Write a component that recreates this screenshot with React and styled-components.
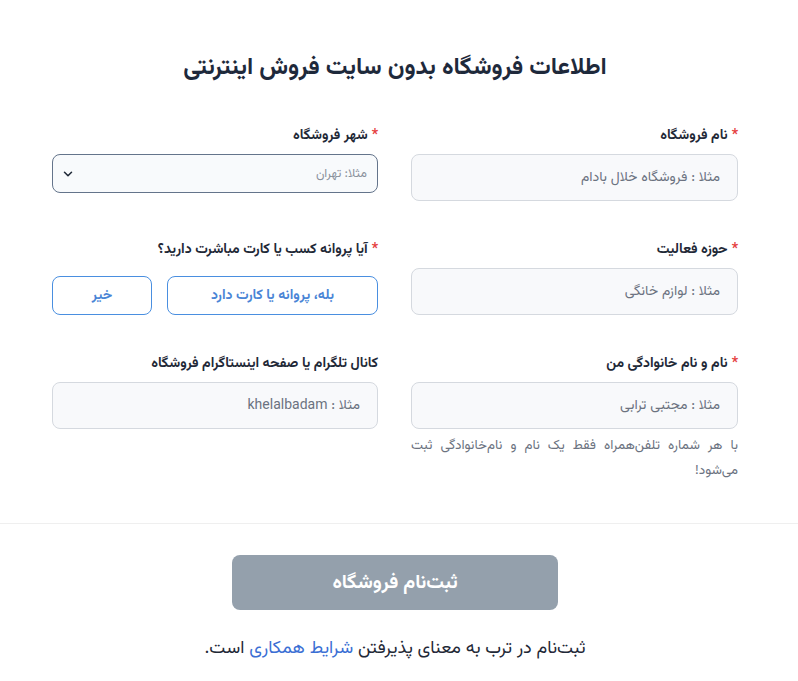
import React from 'react'
import styled, { createGlobalStyle } from 'styled-components'

const GlobalStyle = createGlobalStyle`
  body {
    margin: 0;
    background: #ffffff;
    font-family: Vazirmatn, "Noto Sans Arabic", "DejaVu Sans", sans-serif;
    overflow-x: hidden;
  }
`

const Page = styled.div`
  direction: rtl;
  width: 790px;
  padding-top: 48px;
`

const Title = styled.h1`
  margin: 0 0 38px;
  text-align: center;
  font-size: 24px;
  line-height: 40px;
  font-weight: 700;
  color: #1e293b;
`

const Grid = styled.div`
  width: 686px;
  margin: 0 auto;
  display: grid;
  grid-template-columns: 327px 326px;
  column-gap: 33px;
  row-gap: 39px;
`

const Field = styled.div`
  display: flex;
  flex-direction: column;
`

const Label = styled.label`
  font-size: 14px;
  line-height: 20px;
  font-weight: 700;
  color: #1f2937;
  margin-bottom: 8px;
`

const Star = styled.span`
  color: #e53e3e;
  margin-left: 4px;
`

const TextInput = styled.input`
  box-sizing: border-box;
  height: 47px;
  width: 100%;
  border: 1px solid #d5d9df;
  border-radius: 8px;
  background: #f8f9fb;
  padding: 0 17px;
  font-family: inherit;
  font-size: 14px;
  color: #374151;
  direction: rtl;
  outline: none;
  &::placeholder {
    color: #6b7280;
  }
`

const Select = styled.div`
  box-sizing: border-box;
  height: 39px;
  border: 1px solid #64748b;
  border-radius: 8px;
  background: #f8fafc;
  display: flex;
  align-items: center;
  justify-content: space-between;
  padding: 0 10px 0 8px;
  font-size: 12.5px;
  color: #8a919c;
`

const Choices = styled.div`
  display: flex;
  gap: 15px;
  margin-top: 8px;
`

const Choice = styled.button`
  box-sizing: border-box;
  height: 39px;
  width: ${(p) => p.w}px;
  border: 1px solid #4a8fe0;
  border-radius: 8px;
  background: #ffffff;
  color: #4a85d6;
  font-family: inherit;
  font-size: 14px;
  font-weight: 700;
  cursor: pointer;
`

const Hint = styled.p`
  margin: 4px 0 0;
  font-size: 13.5px;
  line-height: 25px;
  color: #6b7280;
  text-align: justify;
  text-align-last: right;
`

const Divider = styled.hr`
  border: none;
  border-top: 1px solid #efefef;
  margin: 40px -8px 31px 0;
  width: 798px;
`

const Footer = styled.div`
  display: flex;
  flex-direction: column;
  align-items: center;
`

const Submit = styled.button`
  width: 326px;
  height: 55px;
  border: none;
  border-radius: 8px;
  background: #94a0ac;
  color: #ffffff;
  font-family: inherit;
  font-size: 19.5px;
  font-weight: 700;
`

const Terms = styled.p`
  margin: 25px 0 0;
  font-size: 18px;
  line-height: 28px;
  color: #1f2937;
`

const Link = styled.a`
  color: #3b6fd4;
  text-decoration: none;
`

function Chevron() {
  return (
    <svg width="14" height="14" viewBox="0 0 24 24" fill="none" stroke="#1f2937" strokeWidth="2.6" strokeLinecap="round" strokeLinejoin="round">
      <path d="M6 9l6 6 6-6" />
    </svg>
  )
}

export default function App() {
  return (
    <Page>
      <GlobalStyle />
      <Title>اطلاعات فروشگاه بدون سایت فروش اینترنتی</Title>
      <Grid>
        <Field>
          <Label><Star>*</Star>نام فروشگاه</Label>
          <TextInput placeholder="مثلا : فروشگاه خلال بادام" />
        </Field>
        <Field>
          <Label><Star>*</Star>شهر فروشگاه</Label>
          <Select>
            <span>مثلا: تهران</span>
            <Chevron />
          </Select>
        </Field>
        <Field>
          <Label><Star>*</Star>حوزه فعالیت</Label>
          <TextInput placeholder="مثلا : لوازم خانگی" />
        </Field>
        <Field>
          <Label><Star>*</Star>آیا پروانه کسب یا کارت مباشرت دارید؟</Label>
          <Choices>
            <Choice w={211}>بله، پروانه یا کارت دارد</Choice>
            <Choice w={100}>خیر</Choice>
          </Choices>
        </Field>
        <Field>
          <Label><Star>*</Star>نام و نام خانوادگی من</Label>
          <TextInput placeholder="مثلا : مجتبی ترابی" />
          <Hint>با هر شماره تلفن‌همراه فقط یک نام و نام‌خانوادگی ثبت می‌شود!</Hint>
        </Field>
        <Field>
          <Label>کانال تلگرام یا صفحه اینستاگرام فروشگاه</Label>
          <TextInput placeholder="مثلا : khelalbadam" />
        </Field>
      </Grid>
      <Divider />
      <Footer>
        <Submit>ثبت‌نام فروشگاه</Submit>
        <Terms>
          ثبت‌نام در ترب به معنای پذیرفتن <Link href="#">شرایط همکاری</Link> است.
        </Terms>
      </Footer>
    </Page>
  )
}
